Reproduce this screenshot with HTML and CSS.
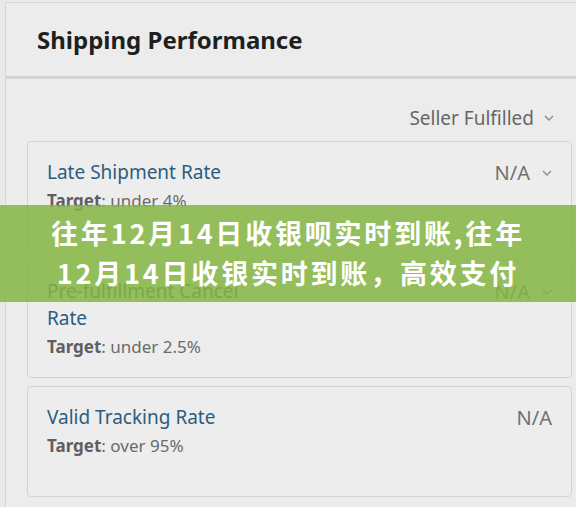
FILE: index.html
```html
<html>

<head>
    <meta charset="UTF-8" />
    <link rel="stylesheet" href="styles.css">
</head>

<body>
    <div id="panel">
        <div class="head">
            <h2>Shipping Performance</h2>
        </div>
        <div class="body">
            <div class="filter">
                <span>Seller Fulfilled</span>
                <svg class="chev" width="10" height="6" viewBox="0 0 10 6"><polyline points="1,1 5,5 9,1" /></svg>
            </div>
            <div class="card">
                <div class="row">
                    <span class="name">Late Shipment Rate</span>
                    <span class="val">N/A <svg class="chev" width="10" height="6" viewBox="0 0 10 6"><polyline points="1,1 5,5 9,1" /></svg></span>
                </div>
                <div class="target"><b>Target</b>: under 4%</div>
            </div>
            <div class="card">
                <div class="row">
                    <span class="name">Pre-fulfillment Cancel<br>Rate</span>
                    <span class="val">N/A <svg class="chev" width="10" height="6" viewBox="0 0 10 6"><polyline points="1,1 5,5 9,1" /></svg></span>
                </div>
                <div class="target"><b>Target</b>: under 2.5%</div>
            </div>
            <div class="card">
                <div class="row">
                    <span class="name">Valid Tracking Rate</span>
                    <span class="val">N/A</span>
                </div>
                <div class="target"><b>Target</b>: over 95%</div>
            </div>
        </div>
    </div>
    <div class="banner">往年12月14日收银呗实时到账,往年<br>12月14日收银实时到账，高效支付</div>
</body>

</html>
```

FILE: styles.css
```css
html,
body {
    margin: 0;
    width: 576px;
    height: 507px;
    overflow: hidden;
    background-color: #e9e9e9;
}

body {
    position: relative;
    font-family: 'Noto Sans', sans-serif;
}

#panel {
    box-sizing: border-box;
    margin: 2px 0 0 5px;
    width: 580px;
    height: 520px;
    border: 1px solid #d5d5d5;
    background-color: #ececec;
}

.head {
    height: 73px;
    padding-left: 31px;
    display: flex;
    align-items: center;
    border-bottom: 3px solid #d3d3d3;
}

h2 {
    margin: 0;
    font-size: 24px;
    font-weight: bold;
    color: #1f1f1f;
}

.body {
    padding: 0 12px 0 21px;
}

.filter {
    display: flex;
    justify-content: flex-end;
    align-items: center;
    gap: 10px;
    padding: 26px 18px 10px 0;
    font-size: 19px;
    line-height: 26px;
    color: #666;
}

.chev {
    fill: none;
    stroke: #8a8a8a;
    stroke-width: 1.4;
}

.card {
    box-sizing: border-box;
    min-height: 111px;
    margin-bottom: 8px;
    padding: 17px 19px 16px 19px;
    border: 1px solid #d3d3d3;
    border-radius: 4px;
    background-color: #ededed;
}

.row {
    display: flex;
    justify-content: space-between;
    align-items: flex-start;
}

.name {
    font-size: 19px;
    line-height: 27px;
    color: #2b5d80;
}

.val {
    display: flex;
    align-items: center;
    gap: 12px;
    font-size: 20px;
    line-height: 27px;
    color: #717171;
}

.target {
    font-size: 17px;
    line-height: 29px;
    color: #6a6a6a;
}

.target b {
    color: #5f5f5f;
}

.banner {
    position: absolute;
    left: 0;
    top: 205px;
    width: 576px;
    height: 97px;
    box-sizing: border-box;
    padding-top: 8px;
    background-color: rgba(132, 182, 66, 0.86);
    color: #fff;
    text-align: center;
    font-family: 'Noto Sans CJK SC', sans-serif;
    font-weight: bold;
    font-size: 27px;
    letter-spacing: 2.8px;
    line-height: 40px;
}
```
